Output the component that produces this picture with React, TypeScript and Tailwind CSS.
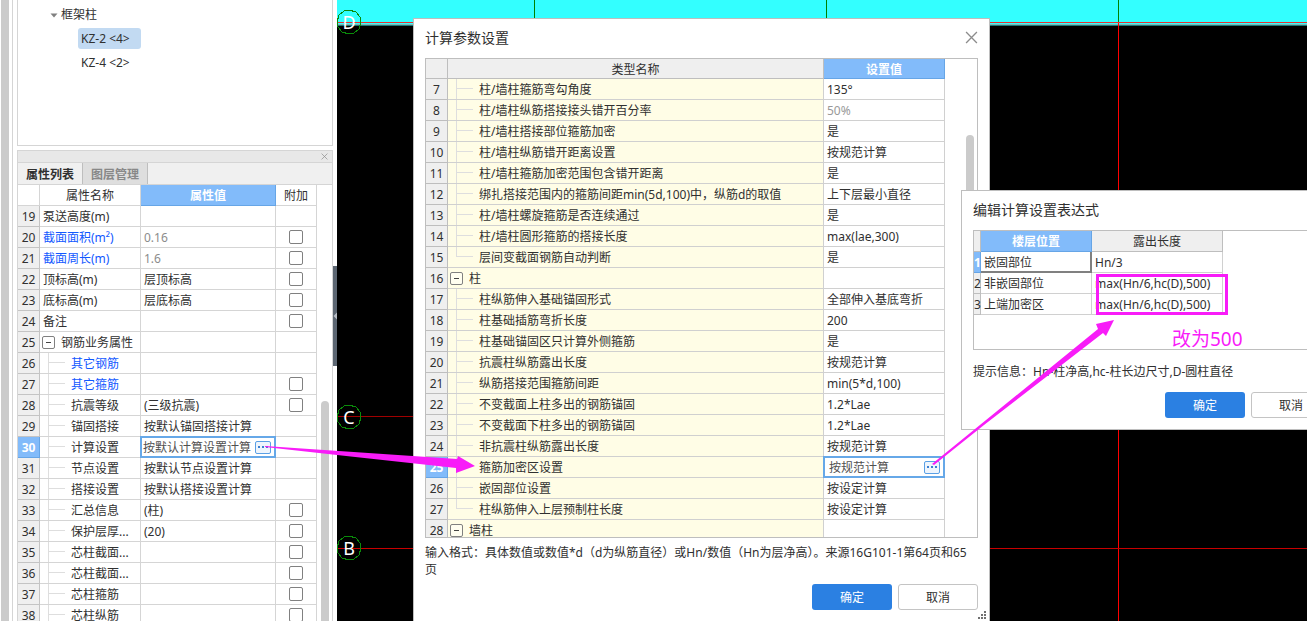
import React from 'react';
import { clsx } from 'clsx';

type PropertyRow = {
  no: number;
  name: string;
  value?: string;
  child?: boolean;
  group?: boolean;
  blue?: boolean;
  muted?: boolean;
  check?: boolean;
};

type ParamRow = {
  no: number;
  name: string;
  value: string;
  group?: boolean;
  last?: boolean;
  muted?: boolean;
};

const propertyRows: PropertyRow[] = [
  { no: 19, name: '泵送高度(m)' },
  { no: 20, name: '截面面积(m²)', value: '0.16', blue: true, muted: true, check: true },
  { no: 21, name: '截面周长(m)', value: '1.6', blue: true, muted: true, check: true },
  { no: 22, name: '顶标高(m)', value: '层顶标高', check: true },
  { no: 23, name: '底标高(m)', value: '层底标高', check: true },
  { no: 24, name: '备注', check: true },
  { no: 25, name: '钢筋业务属性', group: true },
  { no: 26, name: '其它钢筋', child: true, blue: true },
  { no: 27, name: '其它箍筋', child: true, blue: true, check: true },
  { no: 28, name: '抗震等级', value: '(三级抗震)', child: true, check: true },
  { no: 29, name: '锚固搭接', value: '按默认锚固搭接计算', child: true },
  { no: 30, name: '计算设置', value: '按默认计算设置计算', child: true },
  { no: 31, name: '节点设置', value: '按默认节点设置计算', child: true },
  { no: 32, name: '搭接设置', value: '按默认搭接设置计算', child: true },
  { no: 33, name: '汇总信息', value: '(柱)', child: true, check: true },
  { no: 34, name: '保护层厚...', value: '(20)', child: true, check: true },
  { no: 35, name: '芯柱截面...', child: true, check: true },
  { no: 36, name: '芯柱截面...', child: true, check: true },
  { no: 37, name: '芯柱箍筋', child: true, check: true },
  { no: 38, name: '芯柱纵筋', child: true, check: true },
];

const paramRows: ParamRow[] = [
  { no: 7, name: '柱/墙柱箍筋弯勾角度', value: '135°' },
  { no: 8, name: '柱/墙柱纵筋搭接接头错开百分率', value: '50%', muted: true },
  { no: 9, name: '柱/墙柱搭接部位箍筋加密', value: '是' },
  { no: 10, name: '柱/墙柱纵筋错开距离设置', value: '按规范计算' },
  { no: 11, name: '柱/墙柱箍筋加密范围包含错开距离', value: '是' },
  { no: 12, name: '绑扎搭接范围内的箍筋间距min(5d,100)中，纵筋d的取值', value: '上下层最小直径' },
  { no: 13, name: '柱/墙柱螺旋箍筋是否连续通过', value: '是' },
  { no: 14, name: '柱/墙柱圆形箍筋的搭接长度', value: 'max(lae,300)' },
  { no: 15, name: '层间变截面钢筋自动判断', value: '是', last: true },
  { no: 16, name: '柱', value: '', group: true },
  { no: 17, name: '柱纵筋伸入基础锚固形式', value: '全部伸入基底弯折' },
  { no: 18, name: '柱基础插筋弯折长度', value: '200' },
  { no: 19, name: '柱基础锚固区只计算外侧箍筋', value: '是' },
  { no: 20, name: '抗震柱纵筋露出长度', value: '按规范计算' },
  { no: 21, name: '纵筋搭接范围箍筋间距', value: 'min(5*d,100)' },
  { no: 22, name: '不变截面上柱多出的钢筋锚固', value: '1.2*Lae' },
  { no: 23, name: '不变截面下柱多出的钢筋锚固', value: '1.2*Lae' },
  { no: 24, name: '非抗震柱纵筋露出长度', value: '按规范计算' },
  { no: 25, name: '箍筋加密区设置', value: '按规范计算' },
  { no: 26, name: '嵌固部位设置', value: '按设定计算' },
  { no: 27, name: '柱纵筋伸入上层预制柱长度', value: '按设定计算', last: true },
  { no: 28, name: '墙柱', value: '', group: true },
];

const expressionRows = [
  { no: 1, floor: '嵌固部位', length: 'Hn/3' },
  { no: 2, floor: '非嵌固部位', length: 'max(Hn/6,hc(D),500)' },
  { no: 3, floor: '上端加密区', length: 'max(Hn/6,hc(D),500)' },
];

const CloseIcon = ({ size }: { size: number }) => (
  <svg width={size} height={size} viewBox="0 0 12 12" stroke="#8c8c8c" strokeWidth="1.2" fill="none">
    <path d="M1 1 L11 11 M11 1 L1 11" />
  </svg>
);

const CollapseButton = () => (
  <button
    aria-label="折叠"
    className="flex h-[13px] w-[13px] shrink-0 items-center justify-center rounded-xs border border-[#808080] bg-white/40"
  >
    <span className="h-px w-[5px] bg-[#444]" />
  </button>
);

const MoreButton = () => (
  <button
    aria-label="更多"
    className="flex h-[13px] w-4 shrink-0 items-center justify-center gap-0.5 rounded-xs border border-[#5aa0e6] bg-[#eef5fd]"
  >
    <span className="h-0.5 w-0.5 bg-[#3c7fd0]" />
    <span className="h-0.5 w-0.5 bg-[#3c7fd0]" />
    <span className="h-0.5 w-0.5 bg-[#3c7fd0]" />
  </button>
);

// Guide lines of the tree column, closed off on the last child
const TreeGuide = ({ last }: { last?: boolean }) => (
  <span className="flex h-full w-[17px] shrink-0 flex-col">
    <span className="h-[10px] shrink-0 border-b border-l border-[#dedede]" />
    <span className={clsx('flex-1', !last && 'border-l border-[#dedede]')} />
  </span>
);

const DialogButtons = () => (
  <div className="flex justify-end gap-1.5">
    <button className="h-[26px] w-20 rounded-[3px] bg-[#2b80e2] pt-0.5 text-white">确定</button>
    <button className="h-[26px] w-20 rounded-[3px] border border-[#c4c4c4] bg-white pt-0.5">取消</button>
  </div>
);

const ComponentTree = () => (
  <ul className="h-[146px] shrink-0 overflow-hidden border-x border-b border-[#d5d5d5] bg-white pt-0.5">
    <li>
      <div className="flex h-6 items-center gap-[3px] pt-0.5 pl-8">
        <svg width="8" height="5" viewBox="0 0 8 5">
          <path d="M0.5 0.5 H7.5 L4 4.5 Z" fill="#808080" />
        </svg>
        框架柱
      </div>
      <ul className="pl-[60px]">
        <li className="flex h-6 items-center">
          <span className="flex h-[21px] w-[63px] items-center rounded-[3px] bg-[#c2daf2] pt-0.5 pl-[3px]">
            KZ-2 &lt;4&gt;
          </span>
        </li>
        <li className="flex h-6 items-center pt-0.5 pl-[3px]">KZ-4 &lt;2&gt;</li>
      </ul>
    </li>
  </ul>
);

const PropertyTable = () => (
  <table className="w-[299px] table-fixed border-separate border-spacing-0">
    <colgroup>
      <col className="w-[22px]" />
      <col className="w-[101px]" />
      <col className="w-[135px]" />
      <col className="w-[41px]" />
    </colgroup>
    <thead>
      <tr className="h-[21px]">
        <th className="border-r border-b border-[#d5d5d5] p-0" />
        <th className="border-r border-b border-[#d5d5d5] p-0 pt-0.5 font-normal">属性名称</th>
        <th className="border-r border-b border-[#66a5e6] bg-[#82bbfa] p-0 pt-0.5 font-bold text-white">属性值</th>
        <th className="border-r border-b border-[#d5d5d5] p-0 pt-0.5 font-normal">附加</th>
      </tr>
    </thead>
    <tbody>
      {propertyRows.map((row) => {
        const active = row.no === 30;
        return (
          <tr key={row.no} className="h-[21px]">
            <td
              className={clsx(
                'border-r border-b p-0 pt-0.5 text-center',
                active ? 'border-[#66a5e6] bg-[#82bbfa] font-bold text-white' : 'border-[#c4c4c4] bg-[#efefef]'
              )}
            >
              {row.no}
            </td>
            <td className="border-r border-b border-[#d5d5d5] p-0">
              <div className={clsx('flex h-5 items-center whitespace-nowrap', row.blue && 'text-[#1258ff]')}>
                {row.child && (
                  <span className="flex h-5 pr-1.5 pl-2">
                    <TreeGuide />
                  </span>
                )}
                {row.group && (
                  <span className="flex pr-1.5 pl-0.5">
                    <CollapseButton />
                  </span>
                )}
                {!row.child && !row.group && <span className="w-[3px]" />}
                <span className="pt-0.5">{row.name}</span>
              </div>
            </td>
            <td className="border-r border-b border-[#d5d5d5] p-0">
              {active ? (
                <div className="flex h-5 items-center justify-between overflow-hidden pr-1 pl-0.5 whitespace-nowrap text-[#505050] outline-2 -outline-offset-1 outline-[#66a8e8]">
                  <span className="pt-0.5">{row.value}</span>
                  <MoreButton />
                </div>
              ) : (
                <div className={clsx('pt-0.5 pl-[3px] whitespace-nowrap', row.muted && 'text-[#8c8c8c]')}>
                  {row.value}
                </div>
              )}
            </td>
            <td className="border-r border-b border-[#d5d5d5] p-0">
              {row.check && (
                <input
                  type="checkbox"
                  aria-label={`${row.name} 附加`}
                  className="mx-auto block h-3.5 w-3.5 appearance-none rounded-xs border border-[#808080] bg-white"
                />
              )}
            </td>
          </tr>
        );
      })}
    </tbody>
  </table>
);

const SidePanel = () => (
  <aside className="flex h-full w-[337px] shrink-0 bg-white">
    <div className="ml-px w-2 shrink-0 bg-[#cbcbcb]" />
    <div className="ml-[3px] flex min-w-0 flex-1 flex-col gap-1 border-l border-[#d5d5d5] pl-1">
      <ComponentTree />
      <section className="flex min-h-0 flex-1 flex-col border border-b-0 border-[#d5d5d5]">
        <div className="flex h-[11px] shrink-0 items-center justify-end bg-[#e8e8e8] pr-1">
          <button aria-label="关闭">
            <CloseIcon size={7} />
          </button>
        </div>
        <div className="flex h-[23px] shrink-0 border-y border-[#d5d5d5] bg-[#f0f0f0]">
          <button className="w-[65px] border-r border-[#bebebe] bg-[#f0f0f0] pt-0.5 font-bold">属性列表</button>
          <button className="w-[65px] border-r border-[#bebebe] bg-[#dedede] pt-0.5 font-bold text-[#888]">
            图层管理
          </button>
        </div>
        <div className="flex min-h-0 flex-1 overflow-hidden">
          <PropertyTable />
          <div className="mt-[216px] ml-1 w-2 rounded-t-full bg-[#cbcbcb]" />
        </div>
      </section>
    </div>
    <div className="flex w-1 shrink-0 flex-col">
      <button aria-label="收起" className="mt-[266px] flex h-[100px] w-1 items-center bg-[#5c6672]">
        <svg width="4" height="8" viewBox="0 0 4 8">
          <path d="M4 0.5 L0.5 4 L4 7.5 Z" fill="#b8bec6" />
        </svg>
      </button>
    </div>
  </aside>
);

const AxisMark = ({ y, label }: { y: number; label: string }) => (
  <g>
    <path
      d="M0 -12 L7 -10 L11 -5 L12 0 L10 7 L5 11 L0 12 L-7 10 L-11 5 L-12 0 L-10 -7 L-5 -11 Z"
      transform={`translate(12 ${y})`}
      fill="none"
      stroke="#0a8a0a"
    />
    <text x="12" y={y + 7} textAnchor="middle" fontSize="18" fill="#fff">
      {label}
    </text>
  </g>
);

const DrawingCanvas = () => (
  <svg className="absolute inset-0 h-full w-full bg-black" shapeRendering="crispEdges">
    <rect width="100%" height="25" fill="#33ffff" />
    <rect y="22" width="100%" height="1" fill="#e83030" />
    <rect y="24" width="100%" height="1" fill="#7fb4b4" />
    <rect y="25" width="100%" height="1" fill="#1a7878" />
    <rect x="197" width="1" height="25" fill="#008000" />
    <rect x="489" width="1" height="25" fill="#008000" />
    <rect x="781" width="1" height="22" fill="#008000" />
    <rect x="781" y="23" width="1" height="100%" fill="#ff0000" />
    <rect y="416" width="100%" height="1" fill="#a00000" />
    <rect y="548" width="100%" height="1" fill="#c80000" />
    <AxisMark y={22} label="D" />
    <AxisMark y={417} label="C" />
    <AxisMark y={548} label="B" />
  </svg>
);

const ParamDialog = () => (
  <section className="absolute top-[18px] left-[76px] w-[577px] border border-[#bebebe] bg-white px-[11px] pb-3">
    <header className="mb-0.5 flex h-[37px] items-center justify-between">
      <h2 className="text-sm">计算参数设置</h2>
      <button aria-label="关闭">
        <CloseIcon size={13} />
      </button>
    </header>
    <div className="flex h-[480px] overflow-hidden border border-[#bebebe]">
      <table className="w-[519px] table-fixed border-separate border-spacing-0 self-start">
        <colgroup>
          <col className="w-[22px]" />
          <col className="w-[376px]" />
          <col className="w-[121px]" />
        </colgroup>
        <thead>
          <tr className="h-5">
            <th className="border-r border-b border-[#bebebe] bg-[#efefef] p-0" />
            <th className="border-r border-b border-[#bebebe] bg-[#efefef] p-0 pt-0.5 font-normal">类型名称</th>
            <th className="border-r border-b border-[#66a5e6] bg-[#82bbfa] p-0 pt-0.5 font-bold text-white">设置值</th>
          </tr>
        </thead>
        <tbody>
          {paramRows.map((row) => {
            const active = row.no === 25;
            return (
              <tr key={row.no} className="h-[21px]">
                <td
                  className={clsx(
                    'border-r border-b p-0 pt-0.5 text-center',
                    active ? 'border-[#66a5e6] bg-[#82bbfa] font-bold text-white' : 'border-[#bebebe] bg-[#efefef]'
                  )}
                >
                  {row.no}
                </td>
                <td className="border-r border-b border-[#d0d0d0] bg-[#fffde6] p-0">
                  <div className="flex h-5 items-center whitespace-nowrap">
                    {row.group ? (
                      <span className="flex pr-1.5 pl-0.5">
                        <CollapseButton />
                      </span>
                    ) : (
                      <span className="flex h-5 pr-1.5 pl-2">
                        <TreeGuide last={row.last} />
                      </span>
                    )}
                    <span className="pt-0.5">{row.name}</span>
                  </div>
                </td>
                <td className="border-r border-b border-[#d0d0d0] p-0">
                  {active ? (
                    <div className="flex h-5 items-center justify-between pr-1 pl-[5px] text-[#505050] outline-2 -outline-offset-1 outline-[#66a8e8]">
                      <span className="pt-0.5">{row.value}</span>
                      <MoreButton />
                    </div>
                  ) : (
                    <div className={clsx('pt-0.5 pl-[3px] whitespace-nowrap', row.muted && 'text-[#999]')}>
                      {row.value}
                    </div>
                  )}
                </td>
              </tr>
            );
          })}
        </tbody>
      </table>
      <div className="mt-[76px] ml-[21px] h-[180px] w-2 rounded-full bg-[#cbcbcb]" />
    </div>
    <p className="mt-1.5 mb-1.5 leading-[17px]">
      输入格式：具体数值或数值*d（d为纵筋直径）或Hn/数值（Hn为层净高）。来源16G101-1第64页和65页
    </p>
    <DialogButtons />
    <svg className="absolute right-0.5 bottom-0.5" width="9" height="9" viewBox="0 0 9 9" fill="#707070">
      <path d="M6 0h2v2h-2z M3 3h2v2h-2z M6 3h2v2h-2z M0 6h2v2h-2z M3 6h2v2h-2z M6 6h2v2h-2z" />
    </svg>
  </section>
);

const ExpressionDialog = () => (
  <section className="absolute top-[190px] left-[624px] w-[382px] border border-[#bebebe] bg-white px-[11px] pb-[11px]">
    <h2 className="mb-0.5 flex h-[37px] items-center text-sm">编辑计算设置表达式</h2>
    <div className="h-[120px] border border-[#bebebe]">
      <table className="w-[249px] table-fixed border-separate border-spacing-0">
        <colgroup>
          <col className="w-[7px]" />
          <col className="w-[111px]" />
          <col className="w-[131px]" />
        </colgroup>
        <thead>
          <tr className="h-[21px]">
            <th className="border-r border-b border-[#bebebe] bg-[#efefef] p-0" />
            <th className="border-r border-b border-[#66a5e6] bg-[#82bbfa] p-0 pt-0.5 font-bold text-white">楼层位置</th>
            <th className="border-r border-b border-[#bebebe] bg-[#efefef] p-0 pt-0.5 font-normal">露出长度</th>
          </tr>
        </thead>
        <tbody>
          {expressionRows.map((row) => (
            <tr key={row.no} className="h-[21px]">
              <td
                className={clsx(
                  'border-r border-b p-0 pt-0.5',
                  row.no === 1 ? 'border-[#66a5e6] bg-[#82bbfa] font-bold text-white' : 'border-[#bebebe] bg-[#efefef]'
                )}
              >
                {row.no}
              </td>
              <td
                className={clsx(
                  'p-0 pt-0.5 pl-[3px]',
                  row.no === 1 ? 'border-r-2 border-b-2 border-[#808080]' : 'border-r border-b border-[#d0d0d0]'
                )}
              >
                {row.floor}
              </td>
              <td className="border-r border-b border-[#d0d0d0] p-0 pt-0.5 pl-[3px]">{row.length}</td>
            </tr>
          ))}
        </tbody>
      </table>
    </div>
    <p className="mt-3 mb-3 h-[18px] leading-5">提示信息：Hn-柱净高,hc-柱长边尺寸,D-圆柱直径</p>
    <DialogButtons />
  </section>
);

// Arrows and notes drawn over the windows
const Annotations = () => (
  <svg className="pointer-events-none absolute inset-0 h-full w-full" fill="#f81cf8">
    <path d="M265 446 L457 459 L458 456 L475 466 L456 473 L456 468 L337 455 L265 447 Z" />
    <path d="M932 464 L1098 329 L1096 324 L1114 320 L1106 336 L1103 333 L984 425 L934 465 Z" />
    <rect x="1097.5" y="275.5" width="129" height="38" fill="none" stroke="#f81cf8" strokeWidth="3" />
    <text x="1172" y="346" fontSize="19">
      改为500
    </text>
  </svg>
);

const App = () => {
  return (
    <main className="relative flex h-screen min-h-0 overflow-hidden bg-white font-['Noto_Sans','Noto_Sans_CJK_SC',sans-serif] text-xs leading-4 text-[#303030]">
      <SidePanel />
      <div className="relative min-w-0 flex-1 overflow-hidden">
        <DrawingCanvas />
        <ParamDialog />
        <ExpressionDialog />
      </div>
      <Annotations />
    </main>
  );
};

export default App;
